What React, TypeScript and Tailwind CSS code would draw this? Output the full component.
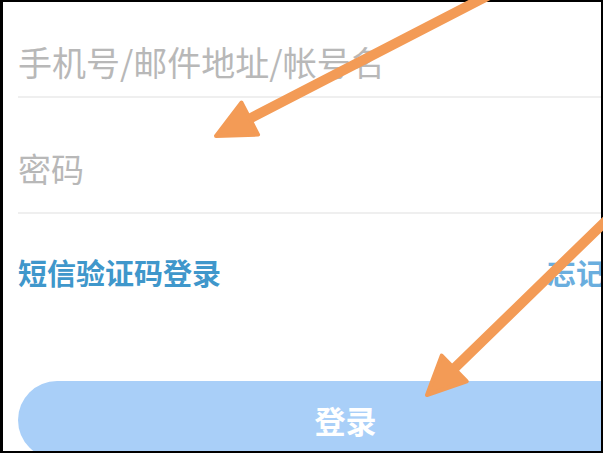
const FONT = { fontFamily: '"Noto Sans CJK SC", "Noto Sans", sans-serif' };

function arrowHead(sx: number, sy: number, tx: number, ty: number, len = 38, half = 18) {
  const dx = tx - sx;
  const dy = ty - sy;
  const l = Math.hypot(dx, dy);
  const ux = dx / l;
  const uy = dy / l;
  const bx = tx - ux * len;
  const by = ty - uy * len;
  const nx = -uy;
  const ny = ux;
  return {
    line: { x1: sx, y1: sy, x2: bx + ux * 6, y2: by + uy * 6 },
    points: `${tx},${ty} ${bx + nx * half},${by + ny * half} ${bx - nx * half},${by - ny * half}`,
  };
}

function Arrows() {
  const a1 = arrowHead(495, -8, 216, 136);
  const a2 = arrowHead(615, 212, 427, 395);
  return (
    <svg className="pointer-events-none absolute inset-0" width="603" height="453" viewBox="0 0 603 453">
      {[a1, a2].map((a, i) => (
        <g key={i} fill="#f39b56" stroke="#f39b56" strokeLinejoin="round">
          <line {...a.line} strokeWidth="10" strokeLinecap="round" />
          <polygon points={a.points} strokeWidth="4" />
        </g>
      ))}
    </svg>
  );
}

export default function App() {
  return (
    <div className="relative h-[453px] w-[603px] overflow-hidden bg-black" style={FONT}>
      <div className="absolute inset-0 overflow-hidden border-t-2 border-r-2 border-b-2 border-l-[3px] border-black bg-white">
        <div className="ml-[15px] w-[655px]">
          <div className="pt-[38px] pb-[12px]">
            <div className="text-[34px] leading-[44px] text-[#b8b8b8]">手机号/邮件地址/帐号名</div>
          </div>
          <div className="h-[2px] bg-[#efefef]" />
          <div className="pt-[48px] pb-[22px]">
            <div className="text-[33px] leading-[44px] text-[#b8b8b8]">密码</div>
          </div>
          <div className="h-[2px] bg-[#efefef]" />
          <div className="mt-[38px] flex items-center justify-between text-[29px] font-bold leading-[40px]">
            <span className="text-[#3f97cb]">短信验证码登录</span>
            <span className="mr-[10px] text-[#6aaede]">忘记密码</span>
          </div>
          <button className="mt-[89px] flex h-[78px] w-full items-center justify-center rounded-full bg-[#a9cff8] text-[31px] font-bold text-white">
            登录
          </button>
        </div>
      </div>
      <Arrows />
    </div>
  );
}
